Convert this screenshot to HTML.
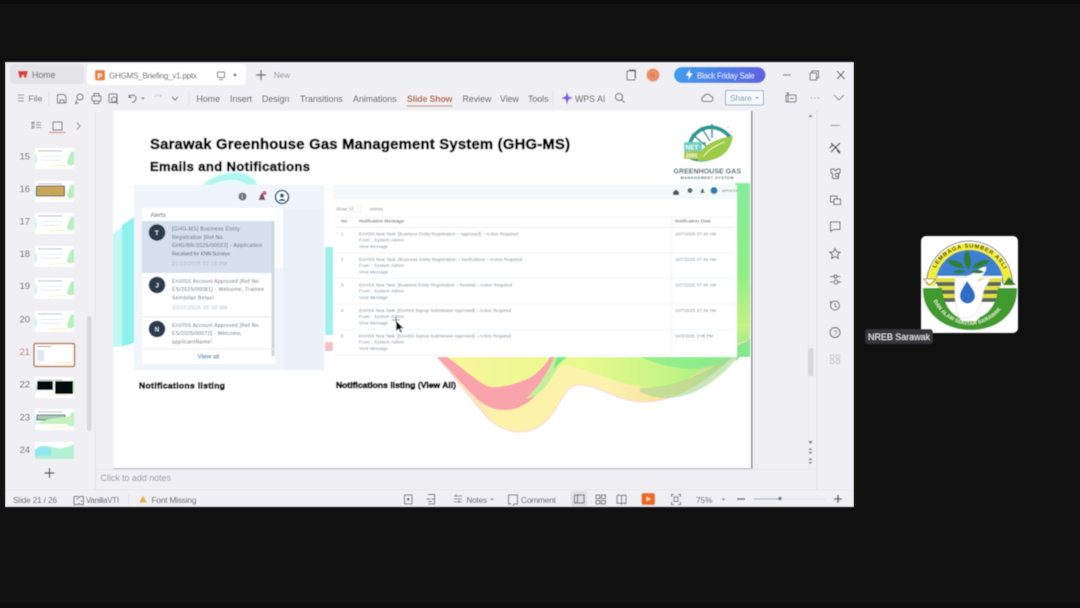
<!DOCTYPE html>
<html><head><meta charset="utf-8"><title>GHGMS Briefing</title>
<style>
html,body{margin:0;padding:0;width:1080px;height:608px;background:#101010;overflow:hidden}
svg{display:block}
text{font-family:"Liberation Sans",sans-serif;fill:#555}
.r{font-size:8.800px;fill:#4a4a4a}
.t{font-size:8px;fill:#555}
.s{font-size:8px;fill:#555}
.n{font-size:9.500px;fill:#666}
.h{font-weight:bold;fill:#000;stroke:#000;stroke-width:.6}
.a{font-size:5.200px;fill:#5a6068}
.d{font-size:5px;fill:#b0b4ba}
.m{font-size:4.300px;fill:#77808a}
.l{font-size:4.300px;fill:#6f8fa8}
.i{fill:none;stroke:#666;stroke-width:1}
</style></head><body>
<svg width="1080" height="608" viewBox="0 0 1080 608" xmlns="http://www.w3.org/2000/svg">
<defs>
<filter id="b" x="-5%" y="-5%" width="110%" height="110%"><feGaussianBlur stdDeviation=".4"/></filter>
<filter id="b2" x="-20%" y="-20%" width="140%" height="140%"><feGaussianBlur stdDeviation="1"/></filter>
<linearGradient id="pill" x1="0" x2="1"><stop offset="0" stop-color="#3d9fee"/><stop offset="1" stop-color="#5f62e0"/></linearGradient>
<linearGradient id="wave" x1="0" x2="1"><stop offset="0" stop-color="#fbd0cc"/><stop offset=".2" stop-color="#fdf3a8"/><stop offset=".55" stop-color="#fbf2ae"/><stop offset=".8" stop-color="#f6dd9c"/><stop offset="1" stop-color="#7de88c"/></linearGradient>
<linearGradient id="wave2" x1="0" x2="1"><stop offset="0" stop-color="#f8f79a"/><stop offset=".45" stop-color="#e8f98e"/><stop offset=".75" stop-color="#c2f585"/><stop offset="1" stop-color="#74ea82"/></linearGradient>
<linearGradient id="gr" x1="0" x2="0" y1="0" y2="1"><stop offset="0" stop-color="#86ec9c"/><stop offset=".5" stop-color="#90ee88"/><stop offset=".8" stop-color="#c4f285"/><stop offset="1" stop-color="#86ea84"/></linearGradient>
<g id="th"><rect x="0" y="0" width="39" height="21" fill="#fff"/><rect x="3" y="2.500" width="24" height=".8" fill="#a8aeb4"/><rect x="6" y="8" width="22" height=".6" fill="#d8dde0"/><rect x="6" y="12" width="20" height=".6" fill="#d8dde0"/><path d="M32 15c1-5 3-10 5-12l2 1v12c-2 2-6 2-7-1z" fill="#b6f0bc"/><path d="M0 6c2 2 3 6 1 10H0z" fill="#c4f5f2"/><path d="M14 19c6-2 12-2 18-1" stroke="#f0eeb0" fill="none" stroke-width=".8"/></g>
</defs>
<rect width="1080" height="608" fill="#101010"/>
<rect x="0" y="0" width="1080" height="4" fill="#0b0b0b"/>
<rect x="0" y="602" width="1080" height="6" fill="#0c0c0c"/>

<g filter="url(#b)">
<!-- window -->
<rect x="5" y="62" width="849" height="445" fill="#f0f0f4"/>
<rect x="10" y="64" width="74" height="20" rx="4" fill="#e3e3e8"/>
<rect x="87" y="64" width="159" height="21" rx="4" fill="#fff"/>
<path d="M18 71h10l-2 7-1.600-.2L23 74l-2 4h-1.500z" fill="#dc3c36"/>
<text x="32" y="78" class="t" style="font-size:8.800px">Home</text>
<rect x="95" y="70" width="10" height="10.500" rx="2" fill="#e8813a"/>
<text x="97.500" y="78.500" style="font-size:7px;fill:#fff;font-weight:bold">P</text>
<text x="109" y="78.500" class="t" textLength="88">GHGMS_Briefing_v1.pptx</text>
<rect x="217.500" y="72" width="7" height="5.500" rx="1" class="i"/><path d="M219 79.500h4" class="i"/>
<circle cx="235" cy="75" r="1.500" fill="#777"/>
<path d="M256 75h10M261 70v10" stroke="#555" stroke-width="1.200"/>
<text x="274" y="78" style="font-size:8px;fill:#8a8a8a">New</text>

<rect x="627" y="71" width="8" height="9" rx="1" class="i"/><path d="M629 70h6.500v8" class="i"/>
<circle cx="653" cy="75" r="6.500" fill="#e99068"/><text x="650.500" y="77.500" style="font-size:6px;fill:#c96a40">N</text>
<rect x="674" y="67" width="91.500" height="16" rx="8" fill="url(#pill)"/>
<path d="M690 69.500l-4 6h3l-1 4.500 4.500-6.500h-3z" fill="#fff"/>
<text x="697" y="78.500" style="font-size:7.800px;fill:#dbe8fb" textLength="57.500">Black Friday Sale</text>
<path d="M783 75h8" stroke="#555"/>
<rect x="810" y="73" width="6.500" height="7" class="i"/><path d="M812 73v-2h6.500v7h-2" class="i"/>
<path d="M837 71l7.500 8M844.500 71l-7.500 8" stroke="#555"/>

<!-- ribbon -->
<path d="M18 95h6M18 98h6M18 101h6" stroke="#888" stroke-width=".9"/>
<text x="28.500" y="101.500" style="font-size:8.600px;fill:#555">File</text>
<path d="M49 92v14" stroke="#ddd"/>
<path d="M57.500 94.500h6.500l2 2v6.500h-8.500zM60 103v-3h4v3" class="i"/>
<circle cx="80" cy="97" r="3" class="i"/><path d="M77 100l-1.500 3.500 3-.5" class="i"/>
<rect x="92" y="96" width="9" height="5" rx="1" class="i"/><path d="M94 96v-2.500h5V96M94 101v2.500h5V101" class="i"/>
<rect x="109" y="94" width="8" height="8.500" rx="1" class="i"/><circle cx="114" cy="99.500" r="2.500" class="i"/><path d="M116 102l2 2" class="i"/>
<path d="M129 97.500c1-3.500 7-3 7 .5 0 2.500-2 4-4 4.500M129 94.500v3h3" class="i"/>
<path d="M141 97.500l2 2 2-2z" fill="#777"/>
<path d="M155 97c1-2.500 5-2.500 6 0M161 94.500v2.500" fill="none" stroke="#ccc"/>
<path d="M172 97l3 3 3-3" class="i"/>
<path d="M189 91v14" stroke="#ddd"/>
<text x="196.500" y="102" class="r">Home</text>
<text x="230" y="102" class="r">Insert</text>
<text x="262" y="102" class="r">Design</text>
<text x="300" y="102" class="r">Transitions</text>
<text x="353" y="102" class="r">Animations</text>
<text x="407" y="102" class="r" style="font-weight:bold;fill:#b5622f" textLength="45.500">Slide Show</text>
<rect x="407" y="105.500" width="45.500" height="1" fill="#c8703a"/>
<text x="462.500" y="102" class="r">Review</text>
<text x="500" y="102" class="r">View</text>
<text x="528" y="102" class="r">Tools</text>
<path d="M553 91v14" stroke="#ddd"/>
<path d="M567 92l1.500 4.500 4.500 1.500-4.500 1.500-1.500 5-1.500-5-4.500-1.500 4.500-1.500z" fill="#7d5ae0"/>
<text x="575" y="102" class="r">WPS AI</text>
<circle cx="619" cy="97" r="3.500" class="i"/><path d="M621.500 99.500l3 3" class="i"/>
<path d="M704.500 101.500c-3.500 0-3.500-4.500-.5-5 1-3 6-3 7 0 2.500 0 2.500 4.500 0 5z" class="i"/>
<rect x="725.500" y="90.500" width="38" height="14.500" rx="1.500" fill="#f6f9fc" stroke="#8fb0c8"/>
<text x="730" y="101" style="font-size:8.200px;fill:#6a92b0">Share</text>
<path d="M755 97l2 2 2-2z" fill="#7a9ab2"/>
<rect x="786" y="95" width="10" height="7" rx="1" class="i"/><path d="M786 93h3M788 93v9M790 98.500h4" class="i"/>
<path d="M811 98h1M814.500 98h1M818 98h1" stroke="#555"/>
<path d="M834 95l5 5 5-5" fill="none" stroke="#888"/>

<!-- sidebar -->
<path d="M95.500 110v380" stroke="#e4e4e8"/>
<path d="M32 122h2v2h-2zM32 126h2v2h-2zM36 122.500h5M36 125h5M36 127.500h5" fill="none" stroke="#888"/>
<rect x="53" y="122" width="9" height="8" class="i"/>
<rect x="49" y="132" width="16.500" height="1" fill="#c8703a"/>
<path d="M77 122.500l3 3.500-3 3.500" fill="none" stroke="#888"/>
<rect x="87" y="316" width="4.500" height="115" rx="2" fill="#d8d8dc"/>
<text x="19.500" y="159.500" class="n">15</text><text x="19.500" y="192" class="n">16</text><text x="19.500" y="224.500" class="n">17</text><text x="19.500" y="257" class="n">18</text><text x="19.500" y="289" class="n">19</text><text x="19.500" y="322.500" class="n">20</text><text x="19.500" y="355" style="font-size:9.500px;fill:#b8794f">21</text><text x="19.500" y="387.500" class="n">22</text><text x="19.500" y="420.500" class="n">23</text><text x="19.500" y="453" class="n">24</text>
<use href="#th" x="35" y="148"/>
<use href="#th" x="35" y="181"/>
<rect x="36.500" y="186" width="28" height="10" rx="1" fill="#c9a55a" stroke="#555"/>
<use href="#th" x="35" y="213"/>
<use href="#th" x="35" y="246"/>
<use href="#th" x="35" y="278"/>
<use href="#th" x="35" y="311"/>
<rect x="34" y="343.500" width="40.500" height="23" rx="1.500" fill="#fff" stroke="#b8794f" stroke-width="1.500"/>
<rect x="37" y="346" width="14" height="1" fill="#999"/><rect x="37" y="350" width="7" height="11" fill="#dfe8f0"/><path d="M55 364c4-2 12-2 17 0" stroke="#eee89a" fill="none"/>
<use href="#th" x="35" y="377"/>
<rect x="37" y="381" width="16" height="9" fill="#050a0e"/><rect x="55" y="381" width="18" height="13" fill="#050a0e"/>
<use href="#th" x="35" y="409"/>
<rect x="37" y="415" width="28" height="5" fill="#a9c9b8" stroke="#4a6a60"/>
<path d="M36 424c10-6 25-6 37-8v8H36z" fill="#c4f2c0"/>
<rect x="35" y="442" width="39" height="17" fill="#fff"/><path d="M35 450c6-7 14-4 22-2 6 1 11-1 17-4v15H35z" fill="#b4f0d4"/><path d="M35 450c6-6 12-3 16-1v7H35z" fill="#90e8f0"/>
<path d="M44.500 473h10M49.500 468v10" stroke="#444" stroke-width="1.200"/>

<!-- slide -->
<rect x="751" y="111" width="1.500" height="358" fill="#8a8a8a"/>
<rect x="113" y="468" width="639" height="1.500" fill="#b5b5b5"/>
<rect x="113" y="110.500" width="638" height="357.500" fill="#fff"/>
<!-- backgrounds -->
<path d="M113 234c8-6 14-12 21-17v126c-8 4-14 4-21 4z" fill="#c4f8f5"/>
<path d="M122 225l12-8v126l-12 3z" fill="#8ef1ec"/>
<path d="M202 185c10-10 45-22 56 0z" fill="#aef6f0" filter="url(#b2)"/>
<path d="M212 185c10-6 26-8 36 0z" fill="#e8fbfa"/>
<rect x="325" y="247" width="8" height="88" fill="#9df0ec"/>
<rect x="325" y="342" width="8" height="9" fill="#f5c0c6"/>
<path d="M735 183h15v150c0 6-2 12-6 20l-8 8z" fill="url(#gr)"/>
<path d="M437 357c15 16 30 38 48 58 20 22 50 24 68 -2 10-14 13-28 26-28 20 0 38 16 62 17 42 2 84-36 109-62V340L700 357z" fill="url(#wave)" stroke="#fcd6d2" stroke-width="1"/>
<path d="M447 357c20 26 46 46 72 40 22-5 30-25 42-30 10-4 30 6 62 16 30 8 60 8 92-26l35-17v17H447z" fill="url(#wave2)"/>
<path d="M640 392c30 14 70 6 110-50v-4c-30 30-70 50-110 50z" fill="#a4d88c" opacity=".6"/>
<path d="M437 357c12 12 24 26 38 40 14 14 34 18 52 6 12-8 24-26 30-46h-7c-8 14-20 22-28 24-10 4-25 8-35 5-10-5-27-20-40-29z" fill="#f9a3ab"/>
<path d="M554 357c-6 16-16 30-28 42 20-6 24-20 30-28l6-14z" fill="#c4f09a"/>
<path d="M557 357l-4 12 14-12z" fill="#7aea88"/>
<path d="M640 357c30 12 70 22 100-8l10-9v17z" fill="#82ea8e" opacity=".7"/>

<text x="150" y="149" class="h" style="font-size:14.800px" textLength="420" lengthAdjust="spacing">Sarawak Greenhouse Gas Management System (GHG-MS)</text>
<text x="150" y="171" class="h" style="font-size:13px" textLength="160" lengthAdjust="spacing">Emails and Notifications</text>

<!-- logo -->
<path d="M690 143c4-14 24-24 40-6" fill="none" stroke="#2a9a90" stroke-width="4"/>
<path d="M692 134l14 12M701 127l9 14M690 143h16M712 124v14" fill="none" stroke="#2a9a90" stroke-width="1.600"/>
<path d="M690 158c8 4 24 4 34-8" fill="none" stroke="#2a9a90" stroke-width="2.500"/>
<path d="M698 161c0-13 14-22 35-25-2 14-11 26-35 25z" fill="#9ccb45"/>
<path d="M703 157c5-7 13-12 22-15" fill="none" stroke="#e7f3c0"/>
<rect x="684" y="142" width="18" height="17" fill="#6fd0c8"/>
<rect x="684" y="151" width="18" height="8" fill="#b0c94c"/>
<text x="685.500" y="149.500" style="font-size:6.500px;fill:#e8fff8;font-weight:bold">NET</text>
<text x="686" y="157.500" style="font-size:5px;fill:#f7fbe0;font-weight:bold">2050</text>
<circle cx="728" cy="127" r=".8" fill="#d8c870"/><circle cx="731" cy="132" r=".8" fill="#d8c870"/>
<text x="673.500" y="173.500" style="font-size:7px;font-weight:bold;fill:#3a5a5e" textLength="67.500">GREENHOUSE GAS</text>
<text x="680.500" y="179" style="font-size:3.900px;fill:#3a5a5e;font-weight:bold" textLength="53">MANAGEMENT SYSTEM</text>

<!-- left panel -->
<rect x="134" y="185" width="190" height="185" fill="#f0f4fb"/>
<rect x="283" y="208" width="41" height="162" fill="#ecf1f9"/>
<circle cx="242.500" cy="196.500" r="4" fill="#6c737a"/><text x="241.500" y="198.500" style="font-size:6px;fill:#fff">i</text>
<path d="M258 200c2-1 2-6 4-7 2 1 2 6 4 7z" fill="#7a5060"/><circle cx="264.500" cy="193" r="2" fill="#c8607a"/>
<circle cx="282" cy="197" r="6.500" fill="#fff" stroke="#2f5f7f" stroke-width="1.600"/><circle cx="282" cy="195.500" r="2" fill="#2f5f7f"/><path d="M278.500 201c1-3 6-3 7 0z" fill="#2f5f7f"/>
<rect x="142" y="208" width="133" height="156" rx="1" fill="#fff"/>
<rect x="275" y="208" width="8" height="60" fill="#fafcfe"/>
<rect x="142" y="221" width="130" height="52" fill="#d5e0ec"/>
<rect x="271.500" y="221" width="3" height="135" fill="#cfd6dd"/>
<path d="M142 317h130" stroke="#e6e6e6"/>
<path d="M142 349h133" stroke="#eee"/>
<text x="150.500" y="217" style="font-size:6px;fill:#555">Alerts</text>
<circle cx="157" cy="232.500" r="8.300" fill="#2b3a4b"/><text x="155" y="235" style="font-size:6px;fill:#dfe6ee;font-weight:bold">T</text>
<circle cx="157" cy="285" r="8.300" fill="#2b3a4b"/><text x="155.500" y="287.500" style="font-size:6px;fill:#dfe6ee;font-weight:bold">J</text>
<circle cx="157" cy="329" r="8.300" fill="#2b3a4b"/><text x="154.800" y="331.500" style="font-size:6px;fill:#dfe6ee;font-weight:bold">N</text>
<text x="172" y="230.500" class="a" textLength="68">[GHG-MS] Business Entity</text>
<text x="172" y="239" class="a" textLength="52">Registration [Ref No.</text>
<text x="172" y="247" class="a" textLength="90">GHG/BR/2025/00023] - Application</text>
<text x="172" y="255.500" class="a" textLength="58">Received for KNN Surveys</text>
<text x="172" y="265.500" class="d" textLength="55">21/10/2025 02:19 PM</text>
<text x="172" y="283" class="a" textLength="88">EnVISS Account Approved [Ref No.</text>
<text x="172" y="291" class="a" textLength="92">ES/2025/00081] - Welcome, Trainee</text>
<text x="172" y="299.500" class="a" textLength="42">Sembilan Belas!</text>
<text x="172" y="309.500" class="d" textLength="55">30/07/2025 09:08 AM</text>
<text x="172" y="327" class="a" textLength="88">EnVISS Account Approved [Ref No.</text>
<text x="172" y="335" class="a" textLength="70">ES/2025/00072] - Welcome,</text>
<text x="172" y="343.500" class="a" textLength="40">applicantName!</text>
<text x="197.500" y="358.500" style="font-size:6.500px;font-weight:bold;fill:#6e96b4" textLength="22">View all</text>
<text x="139" y="388.500" class="h" style="font-size:8.500px" textLength="86">Notifications listing</text>

<!-- right panel -->
<rect x="333" y="185" width="404" height="172" fill="#fff"/>
<rect x="333" y="185" width="404" height="14" fill="#f3f9f8"/>
<path d="M673 192l3-2.500 3 2.500v3h-6z" fill="#555"/>
<circle cx="690" cy="190.500" r="2.500" fill="#666"/>
<path d="M700 193c1.500-1 1-4 2.500-4.500 1.500.5 1 3.500 2.500 4.500z" fill="#666"/>
<circle cx="714" cy="190.500" r="3.500" fill="#2f79b5"/>
<text x="722" y="192" style="font-size:4px;fill:#777">APHXXX</text>
<text x="336" y="210.500" class="m">Show</text><rect x="347" y="206.500" width="14" height="5.500" fill="#fff" stroke="#e5e5e5" stroke-width=".5"/><text x="349" y="210.500" class="m">10</text><text x="370" y="210.500" class="m">entries</text>
<path d="M335 217h400" stroke="#ecf0f2" stroke-width=".7"/><path d="M335 227.500h400" stroke="#e6e9ec" stroke-width=".7"/>
<path d="M671.500 217v138" stroke="#eef0f2" stroke-width=".7"/>
<path d="M335 253h400M335 278.500h400M335 304h400M335 329.500h400M335 355h400" stroke="#f0f2f4" stroke-width=".7"/>
<text x="341" y="222.500" style="font-size:4.800px;fill:#444">No.</text>
<text x="359" y="222.500" style="font-size:4.800px;fill:#444" textLength="45">Notification Message</text>
<text x="675" y="222.500" style="font-size:4.800px;fill:#444" textLength="36">Notification Date</text>
<text x="341" y="235.500" class="m">1</text><text x="341" y="261" class="m">2</text><text x="341" y="286.500" class="m">3</text><text x="341" y="312" class="m">4</text><text x="341" y="337.500" class="m">5</text>
<text x="359" y="235.500" class="m" textLength="159">EnVISS New Task: [Business Entity Registration – Approved] – Action Required</text>
<text x="359" y="241.700" class="m" textLength="45">From : System Admin</text>
<text x="359" y="248" class="l" textLength="29">View Message</text>
<text x="359" y="261" class="m" textLength="163">EnVISS New Task: [Business Entity Registration – Verification] – Action Required</text>
<text x="359" y="267.200" class="m" textLength="45">From : System Admin</text>
<text x="359" y="273.500" class="l" textLength="29">View Message</text>
<text x="359" y="286.500" class="m" textLength="153">EnVISS New Task: [Business Entity Registration – Review] – Action Required</text>
<text x="359" y="292.700" class="m" textLength="45">From : System Admin</text>
<text x="359" y="299" class="l" textLength="29">View Message</text>
<text x="359" y="312" class="m" textLength="152">EnVISS New Task: [EnVISS Signup Submission Approved] – Action Required</text>
<text x="359" y="318.200" class="m" textLength="45">From : System Admin</text>
<text x="359" y="324.500" class="l" textLength="29">View Message</text>
<text x="359" y="337.500" class="m" textLength="152">EnVISS New Task: [EnVISS Signup Submission Approved] – Action Required</text>
<text x="359" y="343.700" class="m" textLength="45">From : System Admin</text>
<text x="359" y="350" class="l" textLength="29">View Message</text>
<text x="675" y="235.500" class="m" textLength="41">10/7/2025 07:49 AM</text>
<text x="675" y="261" class="m" textLength="41">10/7/2025 07:44 AM</text>
<text x="675" y="286.500" class="m" textLength="41">10/7/2025 07:46 AM</text>
<text x="675" y="312" class="m" textLength="41">10/7/2025 07:34 AM</text>
<text x="675" y="337.500" class="m" textLength="38">10/3/2025 3:08 PM</text>
<text x="336" y="388" class="h" style="font-size:8.500px" textLength="120">Notifications listing (View All)</text>
<!-- cursor -->
<path d="M396 320.500v11l2.700-2.500 1.800 4 1.700-.8-1.800-3.800h3.600z" fill="#111" stroke="#fff" stroke-width=".5"/>
<path d="M392 320h8M396 317v6" stroke="#111" stroke-width=".8" opacity=".7"/>

<!-- notes & right scroll -->
<path d="M96 469.500h721" stroke="#e4e4e8"/>
<text x="100.500" y="481" style="font-size:9px;fill:#9a9a9a" textLength="70.500">Click to add notes</text>
<path d="M808.500 110v360" stroke="#e9e9ed"/>
<rect x="808" y="348" width="5.500" height="28" rx="2" fill="#d8d8dc"/>
<path d="M808.500 117l2 -2.500 2 2.500z" fill="#777"/>
<path d="M808.500 441l2 3 2-3zM808.500 450l2-2 2 2zM808.500 452l2 2 2-2zM808.500 460l2-2 2 2zM808.500 462l2 2 2-2z" fill="#666"/>
<path d="M817 110v380" stroke="#dfdfe4"/>

<!-- right tools -->
<g fill="none" stroke="#555">
<path d="M830.500 125.500h9.500" stroke="#888"/>
<path d="M831 143l9 9M840 143l-9 9M829.500 148l3-3M837 150.500l3 3" stroke-width="1.300"/>
<path d="M831 169h3c0 2 3 2 3 0h3v4l-1.500.5v5H832.500v-5L831 173z"/><circle cx="837" cy="175" r="1.800"/>
<rect x="830.500" y="196" width="6.500" height="6"/><rect x="834" y="199" width="6.500" height="5.500" fill="#f0f0f4"/>
<path d="M830.500 222h9.500v7.500h-6.500l-3 2z"/>
<path d="M835 248.500l1.600 3.400 3.600.4-2.700 2.500.8 3.700-3.300-1.900-3.300 1.900.8-3.700-2.700-2.500 3.600-.4z"/>
<path d="M830 276.500h4M837.500 276.500h3M830 282h3M838 282h3"/><circle cx="835.500" cy="276.500" r="1.500"/><circle cx="836" cy="282" r="2"/>
<circle cx="835" cy="305.500" r="4.500"/><path d="M835 303v3l2 1.500M830 303l1-2"/>
<circle cx="835" cy="332.500" r="5"/>
</g>
<text x="833.200" y="335.500" style="font-size:7.500px;fill:#555">?</text>
<g fill="none" stroke="#c8c8cc"><rect x="830.500" y="355" width="3.500" height="3.500" rx="1"/><rect x="836" y="355" width="3.500" height="3.500" rx="1"/><rect x="830.500" y="360" width="3.500" height="3.500" rx="1"/><rect x="836" y="360" width="3.500" height="3.500" rx="1"/></g>

<!-- status -->
<path d="M5 490h849" stroke="#e6e6ea"/>
<text x="13" y="503" class="s" textLength="44">Slide 21 / 26</text>
<path d="M74 496.500h4l1 1 1-1h3.500v8h-3.500l-1-1-1 1h-4zM76.500 499h2M80.500 501h2" class="i"/>
<text x="86" y="503" style="font-size:7.800px;fill:#555" textLength="33">VanillaVTI</text>
<path d="M128.500 494v11" stroke="#eedddd"/>
<path d="M143 495.500l4 7h-8z" fill="#e8b24a"/>
<text x="151.500" y="503" style="font-size:8.400px;fill:#555" textLength="45">Font Missing</text>
<rect x="404.500" y="495" width="7.500" height="9" rx=".5" class="i"/><rect x="407" y="498" width="2.500" height="2.500" fill="#666"/>
<path d="M428 494.500h6.500v9.500h-6.500M426.500 499h4M434.500 499h-3M428 501.500h4" class="i"/>
<path d="M454 496h8M454 499h8M454 502h8M456 494v3M459 500v3" fill="none" stroke="#888"/>
<text x="466.500" y="503" class="s" textLength="20.500">Notes</text>
<path d="M490 498.500l2 2 2-2z" fill="#777"/>
<path d="M508.500 495h9v9h-3l-2 1.500" class="i"/><path d="M508.500 495v9h3" class="i"/>
<text x="521" y="503" style="font-size:8.400px;fill:#555" textLength="35">Comment</text>
<rect x="571" y="491.500" width="16" height="15" rx="2" fill="#dfdfe3"/>
<rect x="574.500" y="495" width="9.500" height="8" class="i"/><path d="M577.500 495v8" class="i"/>
<rect x="596" y="495" width="3.800" height="3.500" class="i"/><rect x="601.500" y="495" width="3.800" height="3.500" class="i"/><rect x="596" y="500.500" width="3.800" height="3.500" class="i"/><rect x="601.500" y="500.500" width="3.800" height="3.500" class="i"/>
<path d="M621.500 496c-1.500-1-3-1-4.500-.5v8c1.500-.5 3-.5 4.500.5 1.500-1 3-1 4.500-.5v-8c-1.500-.5-3-.5-4.500.5zM621.500 496v8" class="i"/>
<rect x="641.500" y="493" width="13.500" height="12" rx="2" fill="#ea6a25"/><path d="M646.500 496.500l4.500 2.500-4.500 2.500z" fill="#ffe0a0"/>
<path d="M671.500 497v-2.500h2.500M678 494.500h2.500v2.500M680.500 502v2.500H678M674 504.500h-2.500V502" class="i"/><rect x="674" y="497" width="4" height="4.500" class="i"/>
<text x="696" y="503" style="font-size:8.200px;fill:#555">75%</text>
<path d="M721.500 498.500l2 2 2-2z" fill="#777"/>
<path d="M737 499h8" stroke="#555" stroke-width="1.300"/>
<path d="M754 499h26" stroke="#88acc4"/><path d="M780 499h45" stroke="#ddd"/><circle cx="780" cy="498.500" r="1.800" fill="#777"/>
<path d="M834 499h8M838 495v8" stroke="#444" stroke-width="1.300"/>
</g>

<!-- window edge -->
<rect x="854" y="62" width="2" height="445" fill="#1a1612"/>
<rect x="3" y="62" width="2" height="445" fill="#1a1612"/>

<!-- Video tile -->
<g filter="url(#b)">
<rect x="921" y="236" width="97" height="97" rx="5" fill="#fff"/>
<path d="M926.500 286a43 43 0 0 1 86 0l-9 0a34 34 0 0 0-68 0z" fill="#f2ed3a"/>
<path d="M926.500 284a43 43 0 0 1 86 0" fill="none" stroke="#222" stroke-width=".7"/>
<path d="M935.500 284a34 34 0 0 1 68 0z" fill="#3d7fd0"/>
<rect x="937" y="276" width="65" height="30" fill="#fff"/>
<path d="M936 278h66v4h-66zM938 286h62v4h-62zM940 294h58v4h-58z" fill="#e2e23c"/>
<path d="M937 282h64v4h-64zM939 290h60v4h-60zM941 298h56v4h-56z" fill="#3e4a3e" opacity=".85"/>
<path d="M923 288h19c1 14 8 25 16 29l4 4h14l4-4c10-4 17-15 18-29h19c1 26-20 42-46 42s-49-16-48-42z" fill="#3f9a2e"/>
<path d="M923.500 279l6 6 6-6z" fill="#fff" stroke="#aaa024"/>
<path d="M1003 285l6-8 7 8z" fill="#2f7f3a"/>
<path d="M955 279c2-2 8 0 12-3 6-1 14-10 19-9 1 3-4 10-9 15 6-3 12-6 13-3-2 5-7 10-7 16-2 10-7 20-14 23h-10c-3-8-5-18-4-39z" fill="#fff" stroke="#ccc" stroke-width=".5"/>
<path d="M967 281c-5 8-7 11-7 15a7.500 7.500 0 0 0 15 0c0-4-3-8-8-15z" fill="#2f6dc4"/>
<path d="M969 270c-5-5-8-12-2-20 5 7 5 14 2 20z" fill="#2f7f3a"/>
<path d="M965 268c-8 1-15-2-18-8 8-1 15 2 18 8zM972 268c8 1 15-2 18-8-8-1-15 2-18 8zM966 272c-5 2-10 2-13 0 4-3 9-3 13 0zM971 272c5 2 10 2 13 0-4-3-9-3-13 0z" fill="#2f7f3a"/>
<path id="arc1" d="M934 272a38 38 0 0 1 71 0" fill="none"/>
<path id="arc2" d="M932 297c6 18 24 28 38 28s32-10 38-28" fill="none"/>
<text style="font-size:5.800px;font-weight:bold;fill:#222">
<textPath href="#arc1" textLength="84" startOffset="4">LEMBAGA SUMBER ASLI</textPath></text>
<text style="font-size:5.200px;font-weight:bold;fill:#dff2c8">
<textPath href="#arc2" textLength="82" startOffset="4">DAN ALAM SEKITAR SARAWAK</textPath></text>
<rect x="865" y="329" width="68" height="15" rx="3" fill="#35353a"/>
<text x="868" y="340" style="font-size:9px;fill:#eee" textLength="62">NREB Sarawak</text>
</g>
</svg>
</body></html>
